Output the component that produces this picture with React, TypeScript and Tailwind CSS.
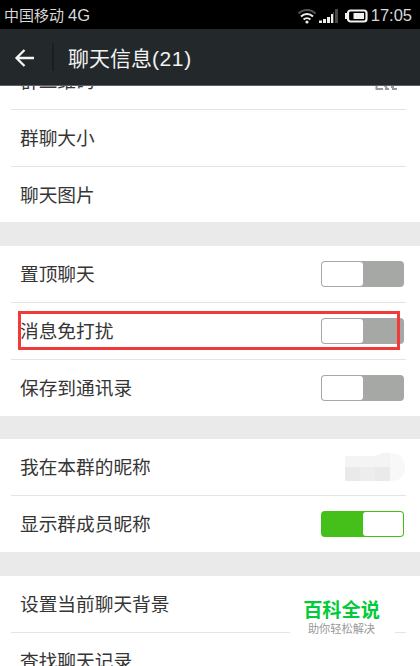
import type { ReactNode } from 'react';

const StatusBar = () => (
  <div className="flex h-[29px] shrink-0 items-center justify-between bg-black pl-[4px] pr-[8px] pt-[2px] text-[#d8d8d8]">
    <span className="flex items-center text-[15px] leading-none">
      中国移动<span className="ml-[4px] text-[16.5px]">4G</span>
    </span>
    <div className="flex items-center">
      <svg className="h-[16px] w-[20px]" viewBox="0 0 20 16" fill="none">
        <path d="M1.5 5.5a12 12 0 0 1 17 0" stroke="#555" strokeWidth="2" />
        <path d="M4 8.5a8.6 8.6 0 0 1 12 0" stroke="#eee" strokeWidth="2" />
        <path d="M6.6 11.5a5 5 0 0 1 6.8 0" stroke="#eee" strokeWidth="2" />
        <circle cx="10" cy="14" r="1.6" fill="#eee" />
      </svg>
      <svg className="ml-[2px] h-[14px] w-[20px]" viewBox="0 0 20 14">
        <path d="M0 11.5h3V14H0zM4 10h3v4H4zM8 8h3v6H8zM12 5h2v9h-2z" fill="#eee" />
        <path d="M14 3h1v11h-1zM16 0h3v14h-3z" fill="#4a4a4a" />
      </svg>
      <svg className="ml-[6px] h-[14px] w-[23px]" viewBox="0 0 23 14">
        <path d="M1 4v6" stroke="#eee" strokeWidth="2" />
        <rect x="3" y="1.5" width="18.5" height="11" rx="2.5" fill="none" stroke="#f2f2f2" strokeWidth="2.2" />
        <rect x="8.5" y="4" width="10.5" height="6" fill="#f2f2f2" />
      </svg>
      <span className="ml-[3px] text-[16.5px] leading-none">17:05</span>
    </div>
  </div>
);

const Header = () => (
  <header className="flex h-[57px] shrink-0 items-center border-b border-[#596062] bg-[#23292b] text-[#f2f2f2]">
    <svg className="ml-[14px] mt-[2px] h-[20px] w-[21px]" viewBox="0 0 21 20" fill="none" stroke="#f5f5f5" strokeWidth="2.3">
      <path d="M20 10H2.5M10.5 2L2.5 10l8 8" />
    </svg>
    <div className="ml-[17px] h-[28px] w-[2px] bg-[#191e20]" />
    <h1 className="ml-[14px] pt-[3px] text-[21px] leading-none">
      聊天信息<span className="tracking-[0.6px]">(21)</span>
    </h1>
  </header>
);

const Toggle = ({ on = false }: { on?: boolean }) =>
  on ? (
    <div className="flex h-[26px] w-[83px] justify-end rounded-[4px] bg-[#45c01a] p-px">
      <div className="w-[40px] rounded-[3px] bg-white" />
    </div>
  ) : (
    <div className="flex h-[26px] w-[83px] rounded-[4px] bg-[#a6a8a5] p-px">
      <div className="w-[41px] rounded-[3px] bg-white" />
    </div>
  );

interface RowProps {
  label: string;
  last?: boolean;
  children?: ReactNode;
}

const Row = ({ label, last, children }: RowProps) => (
  <div className={`ml-[11px] mr-[14px] flex shrink-0 items-center justify-between pl-[9px] pr-[2px] ${last ? 'h-[56px]' : 'h-[57px] border-b border-[#e4e4e4]'}`}>
    <span className="pt-[2px] text-[18.7px] leading-none text-[#353535]">{label}</span>
    {children}
  </div>
);

const Gap = () => <div className="h-[24px] shrink-0 bg-[#eaeaea]" />;

const QrIcon = () => (
  <svg className="mr-[7px] h-[22px] w-[22px]" viewBox="0 0 22 22" fill="none" stroke="#999" strokeWidth="2">
    <path d="M1 1h7v7H1zM14 1h7v7h-7zM7 14H1.5v5H8M9 15l3 3M10 19h4M14 15h3v3M22 15h-4v4h4" />
  </svg>
);

// Nickname hidden behind a mosaic
const Mosaic = () => (
  <svg className="-mr-px -mt-px h-[30px] w-[60px]" viewBox="0 0 60 30">
    <path d="M0 4h30l8-3h7v14H0z" fill="#f4f4f4" />
    <path d="M45 1q15 0 15 14t-15 14z" fill="#f8f8f8" />
    <path d="M0 15h45v14H0z" fill="#eaeaea" />
    <path d="M15 15h15v14H15z" fill="#ededed" />
  </svg>
);

const Watermark = () => (
  <div className="absolute left-[290px] top-[594px] flex h-[50px] w-[105px] flex-col items-center bg-white">
    <div className="mt-[7px] pr-[2px] text-[19.2px] font-bold leading-[20px] text-[#00cb38]">百科全说</div>
    <div className="mt-[2px] pr-[2px] text-[11.2px] leading-[13px] text-[#999]">助你轻松解决</div>
  </div>
);

const App = () => (
  <div className="relative flex h-[666px] w-[420px] flex-col overflow-hidden bg-white font-['Liberation_Sans','Noto_Sans_CJK_SC',sans-serif]">
    <StatusBar />
    <Header />
    {/* First row is scrolled half under the header */}
    <section className="flex h-[136px] shrink-0 flex-col justify-end overflow-hidden">
      <div className="-mb-px">
        <Row label="群二维码">
          <QrIcon />
        </Row>
        <Row label="群聊大小" />
        <Row label="聊天图片" last />
      </div>
    </section>
    <Gap />
    <section className="shrink-0">
      <Row label="置顶聊天">
        <Toggle />
      </Row>
      <Row label="消息免打扰">
        <Toggle />
      </Row>
      <Row label="保存到通讯录" last>
        <Toggle />
      </Row>
    </section>
    <div className="h-[23px] shrink-0 bg-[#eaeaea]" />
    <section className="shrink-0">
      <Row label="我在本群的昵称">
        <Mosaic />
      </Row>
      <Row label="显示群成员昵称" last>
        <Toggle on />
      </Row>
    </section>
    <Gap />
    <section className="shrink-0">
      <Row label="设置当前聊天背景" />
      <Row label="查找聊天记录" last />
    </section>

    {/* Highlight around the mute option */}
    <div className="absolute left-[18px] top-[311px] h-[39px] w-[382px] border-3 border-[#f23a38]" />
    <Watermark />
  </div>
);

export default App;
